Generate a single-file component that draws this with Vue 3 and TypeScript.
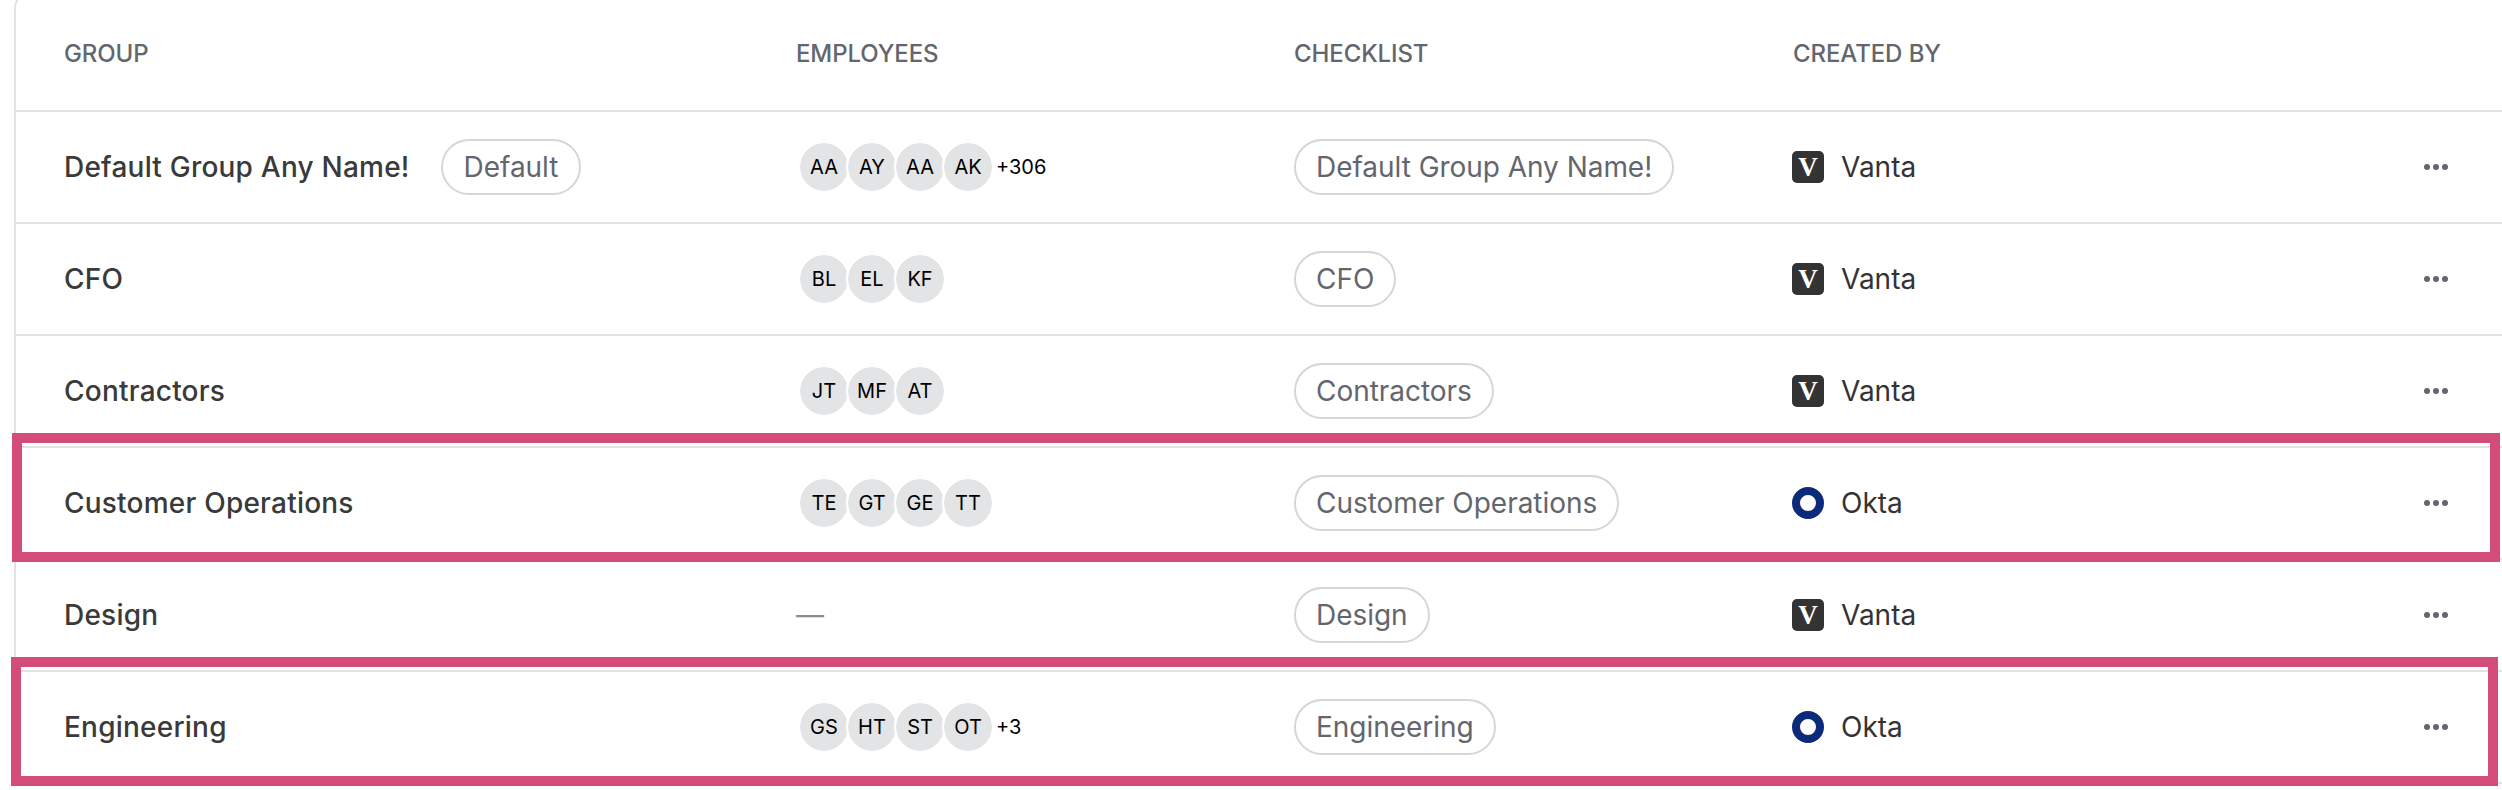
<script setup lang="ts">
interface Row {
  name: string
  tag?: string
  avatars: string[]
  more?: string
  creator: 'Vanta' | 'Okta'
}

const rows: Row[] = [
  { name: 'Default Group Any Name!', tag: 'Default', avatars: ['AA', 'AY', 'AA', 'AK'], more: '+306', creator: 'Vanta' },
  { name: 'CFO', avatars: ['BL', 'EL', 'KF'], creator: 'Vanta' },
  { name: 'Contractors', avatars: ['JT', 'MF', 'AT'], creator: 'Vanta' },
  { name: 'Customer Operations', avatars: ['TE', 'GT', 'GE', 'TT'], creator: 'Okta' },
  { name: 'Design', avatars: [], creator: 'Vanta' },
  { name: 'Engineering', avatars: ['GS', 'HT', 'ST', 'OT'], more: '+3', creator: 'Okta' },
]
</script>

<template>
  <div class="page">
    <div class="card">
      <div class="row head">
        <div>GROUP</div>
        <div>EMPLOYEES</div>
        <div>CHECKLIST</div>
        <div>CREATED BY</div>
      </div>
      <div v-for="row in rows" :key="row.name" class="row body">
        <div class="name-cell">
          <span class="name">{{ row.name }}</span>
          <span v-if="row.tag" class="pill tag">{{ row.tag }}</span>
        </div>
        <div class="people">
          <template v-if="row.avatars.length">
            <span v-for="(a, i) in row.avatars" :key="i" class="avatar">{{ a }}</span>
            <span v-if="row.more" class="more">{{ row.more }}</span>
          </template>
          <span v-else class="none">—</span>
        </div>
        <div class="check-cell">
          <span class="pill">{{ row.name }}</span>
        </div>
        <div class="creator">
          <span v-if="row.creator === 'Vanta'" class="vanta">V</span>
          <span v-else class="okta"></span>
          <span>{{ row.creator }}</span>
        </div>
        <svg class="menu" width="24" height="6" viewBox="0 0 24 6" aria-hidden="true">
          <circle cx="3" cy="3" r="3" />
          <circle cx="12" cy="3" r="3" />
          <circle cx="21" cy="3" r="3" />
        </svg>
      </div>
    </div>
    <div class="mark mark-a"></div>
    <div class="mark mark-b"></div>
  </div>
</template>

<style scoped>
.page {
  position: relative;
  width: 2502px;
  height: 790px;
  overflow: hidden;
  background: #fff;
  font-family: Inter, "Liberation Sans", sans-serif;
}
.card {
  margin: -8px 0 0 14px;
  border-left: 2px solid #e3e3e3;
  border-top: 2px solid #e3e3e3;
  border-top-left-radius: 16px;
}
.row {
  display: grid;
  grid-template-columns: 732px 498px 499px 1fr 78px;
  align-items: center;
  padding-left: 48px;
  border-bottom: 2px solid #e3e3e3;
}
.head {
  height: 118px;
  padding-top: 2px;
  box-sizing: border-box;
  font-size: 24px;
  font-weight: 450;
  letter-spacing: -0.1px;
  color: #63666d;
}
.body {
  height: 110px;
}
.name-cell {
  display: flex;
  align-items: center;
  gap: 31px;
}
.name {
  font-size: 28px;
  font-weight: 500;
  letter-spacing: 0.22px;
  color: #3a3a3a;
}
.pill {
  display: inline-flex;
  align-items: center;
  height: 56px;
  box-sizing: border-box;
  padding: 0 20px;
  border: 2px solid #d6d6d6;
  border-radius: 28px;
  font-size: 28px;
  letter-spacing: -0.04px;
  color: #63666d;
}
.tag {
  padding: 0 21px;
}
.people {
  display: flex;
  align-items: center;
  padding-left: 2px;
}
.avatar {
  display: flex;
  align-items: center;
  justify-content: center;
  width: 48px;
  height: 48px;
  margin-right: -4px;
  border: 2px solid #fff;
  border-radius: 50%;
  background: #e3e4e6;
  background-clip: padding-box;
  font-size: 20px;
  color: #000;
}
.more {
  margin-left: 6px;
  font-size: 20px;
  color: #000;
}
.none {
  margin-left: -2px;
  font-size: 28px;
  color: #8a8c92;
}
.creator {
  display: flex;
  align-items: center;
  gap: 17px;
  margin-left: -1px;
  font-size: 28px;
  color: #333;
}
.vanta {
  display: flex;
  align-items: center;
  justify-content: center;
  width: 32px;
  height: 32px;
  border-radius: 5px;
  background: #333;
  color: #fff;
  font-family: "Liberation Serif", serif;
  font-weight: 700;
  font-size: 27px;
  line-height: 32px;
}
.okta {
  width: 32px;
  height: 32px;
  box-sizing: border-box;
  border: 8px solid #0b2a7a;
  border-radius: 50%;
}
.menu {
  fill: #63666d;
}
.mark {
  position: absolute;
  box-sizing: border-box;
  border: 10px solid #d44c7a;
  pointer-events: none;
}
.mark-a {
  left: 12px;
  top: 433px;
  width: 2488px;
  height: 129px;
}
.mark-b {
  left: 11px;
  top: 657px;
  width: 2487px;
  height: 129px;
}
</style>
